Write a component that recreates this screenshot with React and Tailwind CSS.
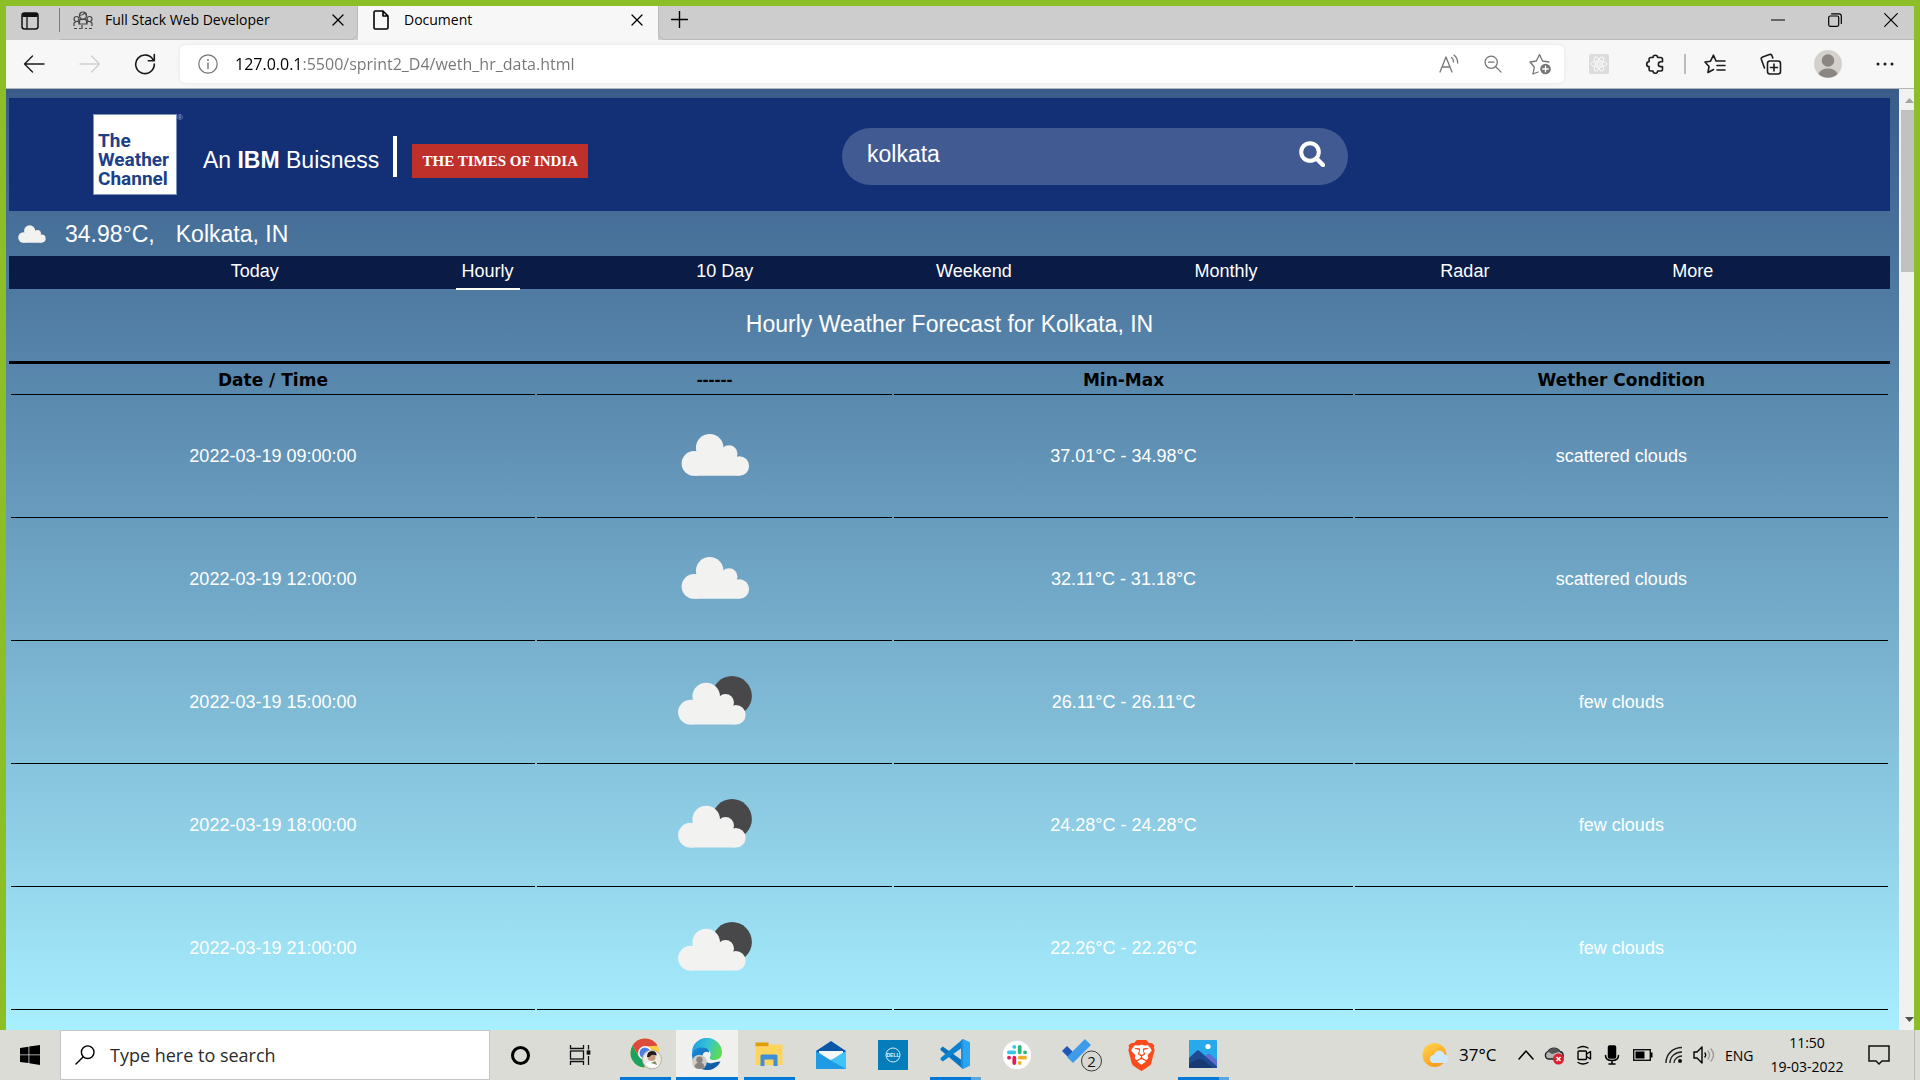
import React from "react";
import { SiBrave } from "react-icons/si";

const arial = "font-['Liberation_Sans',Arial,sans-serif]";

const forecast = [
  { time: "2022-03-19 09:00:00", range: "37.01°C - 34.98°C", condition: "scattered clouds" },
  { time: "2022-03-19 12:00:00", range: "32.11°C - 31.18°C", condition: "scattered clouds" },
  { time: "2022-03-19 15:00:00", range: "26.11°C - 26.11°C", condition: "few clouds" },
  { time: "2022-03-19 18:00:00", range: "24.28°C - 24.28°C", condition: "few clouds" },
  { time: "2022-03-19 21:00:00", range: "22.26°C - 22.26°C", condition: "few clouds" },
];

const navItems = ["Today", "Hourly", "10 Day", "Weekend", "Monthly", "Radar", "More"];

function Line({ className = "", vb = "0 0 20 20", sw = 1.2, children }) {
  return (
    <svg viewBox={vb} className={className} fill="none" stroke="currentColor" strokeWidth={sw} strokeLinecap="round" strokeLinejoin="round" aria-hidden="true">
      {children}
    </svg>
  );
}

function CloudShape() {
  return (
    <g fill="#f2f2f1">
      <circle cx="39.7" cy="20.3" r="13.8" />
      <circle cx="59" cy="26.3" r="8.5" />
      <circle cx="69.3" cy="38.5" r="9.8" />
      <circle cx="24" cy="35.9" r="12.4" />
      <path d="M24 30l16-4h18l8 5 3.300 1v16.300H24z" />
    </g>
  );
}

function WeatherIcon({ condition }) {
  return (
    <svg viewBox="0 0 90 60" className="mx-auto h-[60px] w-[90px]" role="img" aria-label={condition}>
      {condition === "few clouds" ? (
        <>
          <circle cx="62" cy="23" r="19.900" fill="#48484a" />
          <g transform="translate(-3.500 3.300)">
            <CloudShape />
          </g>
        </>
      ) : (
        <g transform="translate(0 .5)">
          <CloudShape />
        </g>
      )}
    </svg>
  );
}

/* ---------- Browser chrome ---------- */

function CloseIcon() {
  return (
    <Line vb="0 0 12 12" className="h-3 w-3" sw={1.3}>
      <path d="M1 1l10 10M11 1L1 11" />
    </Line>
  );
}

function TabBar() {
  return (
    <div className="flex h-[34px] items-stretch bg-[#cdcdcd] text-black">
      <div className="flex flex-1 items-stretch">
        <button aria-label="Tab actions menu" className="flex w-[53px] items-center pb-1 pl-[15px]">
          <svg viewBox="0 0 18 18" className="h-[18px] w-[18px]" fill="none" stroke="#111" strokeWidth="1.5" aria-hidden="true">
            <rect x="1" y="1" width="16" height="16" rx="2.500" />
            <path d="M1.500 3h15" strokeWidth="4" />
            <path d="M6 5v12" strokeWidth="1.300" />
          </svg>
        </button>
        <div className="mt-[2px] h-6 w-px bg-[#7b7b7b]" />
        <div className="flex w-[298px] items-center rounded-br-lg border-r border-b border-[#bababa] pr-[13px] pb-1.5 pl-[13px]">
          <svg viewBox="0 0 20 18" className="h-[18px] w-5" fill="none" stroke="#444" strokeWidth="1.200" aria-hidden="true">
            <circle cx="10" cy="4.500" r="3.500" />
            <path d="M6.500 4.500c2 0 4-1 5-2.500l2 2.500M7 8.500h6l1 4.500H6z" />
            <circle cx="3.500" cy="8" r="2.500" />
            <circle cx="16.500" cy="8" r="2.500" />
            <path d="M1 15v-3l2-1.500h2L7 13M19 15v-3l-2-1.500h-2L13 13M1 17.500h3M6 17.500h2M9 14v4M12 17.500h2M16 17.500h3" />
          </svg>
          <span className="ml-3 flex-1 text-[14px] leading-5">Full Stack Web Developer</span>
          <button aria-label="Close tab"><CloseIcon /></button>
        </div>
        <div className="flex w-[300px] items-center bg-[#f7f7f7] pr-[15px] pb-1.5 pl-[15px]">
          <Line vb="0 0 16 20" className="h-5 w-4" sw={1.6}>
            <path d="M2.500 1h7.500l5 5v11.500q0 1.500-1.500 1.500h-11Q1 19 1 17.500v-15Q1 1 2.500 1zM10 1v5h5" />
          </Line>
          <span className="ml-[15px] flex-1 text-[14px] leading-5">Document</span>
          <button aria-label="Close tab"><CloseIcon /></button>
        </div>
        <div className="flex flex-1 items-center rounded-bl-lg border-b border-l border-[#bababa] pb-1.5 pl-3">
          <button aria-label="New tab">
            <Line vb="0 0 17 17" className="h-[17px] w-[17px]" sw={1.4}>
              <path d="M8.500 .5v16M.5 8.500h16" />
            </Line>
          </button>
        </div>
      </div>
      <div className="flex items-center border-b border-[#bababa] pb-1.5">
        <button aria-label="Minimise" className="flex w-[57px] justify-center">
          <Line vb="0 0 14 14" className="h-3.5 w-3.5"><path d="M.5 7h13" /></Line>
        </button>
        <button aria-label="Restore" className="flex w-[57px] justify-center">
          <Line vb="0 0 14 14" className="h-3.5 w-3.5">
            <rect x=".700" y="3" width="10" height="10.300" rx="1.500" />
            <path d="M3.500 .8h7.500q2.300 0 2.300 2.300V10.500" />
          </Line>
        </button>
        <button aria-label="Close" className="flex w-[51px] justify-center pl-1">
          <Line vb="0 0 14 14" className="h-3.5 w-3.5"><path d="M.7.7l12.600 12.600M13.300.7L.7 13.300" /></Line>
        </button>
      </div>
    </div>
  );
}

function Toolbar() {
  return (
    <div className="flex h-[49px] items-center border-b border-[#b5b5b5] bg-[#f7f7f7] text-[#1b1b1b]">
      <button aria-label="Back" className="flex w-14 justify-center">
        <Line vb="0 0 22 20" className="h-5 w-[22px]" sw={1.4}><path d="M21 10H1.500M9.500 2l-8 8 8 8" /></Line>
      </button>
      <button aria-label="Forward" className="flex w-14 justify-center text-[#cfcfcf]">
        <Line vb="0 0 22 20" className="h-5 w-[22px]" sw={1.4}><path d="M1 10h19.500M12.500 2l8 8-8 8" /></Line>
      </button>
      <button aria-label="Refresh" className="flex w-14 justify-center pr-0.5">
        <Line vb="0 0 22 22" className="h-[22px] w-[22px]" sw={1.6}><path d="M19.500 7.500A9.300 9.300 0 1 0 20.300 11M20.300 1.500v6.200h-6" /></Line>
      </button>
      <div className="ml-1.5 flex h-[38px] flex-1 items-center rounded-md bg-white text-[#757575] shadow-[0_0_4px_rgba(0,0,0,0.08)]">
        <button aria-label="Site information" className="flex w-[55px] justify-center">
          <Line className="h-5 w-5">
            <circle cx="10" cy="10" r="9.200" />
            <path d="M10 9v5.500" strokeWidth="1.400" />
            <path d="M10 5.800v.3" strokeWidth="1.800" />
          </Line>
        </button>
        <input
          aria-label="Address"
          defaultValue="127.0.0.1:5500/sprint2_D4/weth_hr_data.html"
          className="min-w-0 flex-1 bg-[linear-gradient(90deg,#000_67px,#757575_67px)] bg-clip-text text-[16px] leading-6 text-transparent outline-none"
        />
        <button aria-label="Read aloud" className="flex w-[46px] justify-center">
          <Line className="h-5 w-5" sw={1.3}><path d="M1 18L7 3l6 15M3 13h8M12.500 3.500c1.500 1 2 2.500 2 4.500M15 1c2.500 2 3.700 4.500 3.700 8" /></Line>
        </button>
        <button aria-label="Zoom" className="flex w-[46px] justify-center pr-1">
          <Line className="h-[18px] w-[18px]" sw={1.4}><circle cx="8" cy="8" r="6.800" /><path d="M13 13l6 6M5 8h6" /></Line>
        </button>
        <button aria-label="Add to favourites" className="flex w-[46px] justify-center pr-0.5">
          <Line vb="0 0 22 22" className="h-[22px] w-[22px]" sw={1.3}>
            <path d="M9 19l-5 2 1.300-7L1 9l6.300-1L10.500 1.500 13.500 8l6.500 1" />
            <circle cx="16.500" cy="16" r="5.300" fill="currentColor" stroke="none" />
            <path d="M16.500 13.200v5.600M13.700 16h5.600" stroke="#fff" />
          </Line>
        </button>
      </div>
      <button aria-label="React extension" className="ml-[7px] flex w-14 justify-center">
        <svg viewBox="0 0 20 20" className="h-5 w-5" fill="none" stroke="#fff" strokeWidth=".8" aria-hidden="true">
          <rect width="20" height="20" rx="1.500" fill="#dcdcdc" stroke="none" />
          <ellipse cx="10" cy="10" rx="8" ry="3" />
          <ellipse cx="10" cy="10" rx="8" ry="3" transform="rotate(60 10 10)" />
          <ellipse cx="10" cy="10" rx="8" ry="3" transform="rotate(120 10 10)" />
          <circle cx="10" cy="10" r="1.500" />
        </svg>
      </button>
      <button aria-label="Extensions" className="flex w-14 justify-center">
        <Line className="h-5 w-5" sw={1.6}>
          <path d="M5.800 3.500H8a2.300 2.300 0 0 1 4.600 0h3.200q1.700 0 1.700 1.700V7.800h-1.700a2.400 2.400 0 1 0 0 4.800h1.700v2.700q0 1.700-1.700 1.700h-3.200a2.300 2.300 0 0 1-4.600 0H5.800q-1.700 0-1.700-1.700v-2.700a2.400 2.400 0 0 1 0-4.800V5.200q0-1.700 1.700-1.700z" />
        </Line>
      </button>
      <div className="mx-px h-5 w-0.5 bg-[#bcbcbc]" />
      <button aria-label="Favourites" className="flex w-14 justify-center">
        <Line vb="0 0 22 20" className="h-5 w-[22px]" sw={1.6}>
          <path d="M9.500 15.500L4 18.500l1-6L1 8l5.500-.8L9.500 1.200 12 7M13 7h8M13 11.500h8M13 16h8" />
        </Line>
      </button>
      <button aria-label="Collections" className="flex w-14 justify-center">
        <Line vb="0 0 22 22" className="h-[22px] w-[22px]" sw={1.6}>
          <rect x="7.500" y="8" width="13" height="13" rx="2.500" />
          <path d="M14 11v7M10.500 14.500h7M4.500 15L1.300 6.300Q.8 4.500 2.600 3.900L9.500 1.500q1.800-.6 2.500 1.200l.8 2.300" />
        </Line>
      </button>
      <button aria-label="Profile" className="flex w-14 justify-center pl-0.5">
        <svg viewBox="0 0 28 28" className="h-7 w-7" aria-hidden="true">
          <circle cx="14" cy="14" r="14" fill="#d4d1cd" />
          <circle cx="14" cy="10.500" r="6.200" fill="#8b8682" />
          <path d="M4.500 24a10 8 0 0 1 19 0 14 14 0 0 1-19 0z" fill="#8b8682" />
        </svg>
      </button>
      <button aria-label="Settings and more" className="mr-[3px] flex w-14 justify-center pl-1">
        <svg viewBox="0 0 18 4" className="h-1 w-[18px]" fill="#1b1b1b" aria-hidden="true">
          <circle cx="2" cy="2" r="1.500" /><circle cx="9" cy="2" r="1.500" /><circle cx="16" cy="2" r="1.500" />
        </svg>
      </button>
    </div>
  );
}

/* ---------- Weather page ---------- */

function SiteHeader() {
  return (
    <header className="flex h-[113px] items-start bg-[#132f76] text-white">
      <div className="flex w-[833px] shrink-0 items-start pt-4 pl-[84px]">
        <p className="flex h-[81px] w-[84px] items-end border border-[#7f93bd] bg-white pb-1.5 pl-1 font-['Roboto',sans-serif] text-[19px] leading-[19px] font-bold text-[#1c3f8a]">
          The Weather Channel
        </p>
        <span className="text-[8px] leading-2 text-[#9fb0d3]">®</span>
        <p className="mt-8 ml-5 text-[23px] leading-7 whitespace-nowrap">
          An <b>IBM</b> Buisness
        </p>
        <div className="mt-[22px] ml-3.5 h-[41px] w-1 bg-white" />
        <a href="#toi" className="mt-[30px] ml-[15px] flex h-[34px] w-44 items-center justify-center bg-[#c0302b] font-['Liberation_Serif',serif] text-[15px] font-bold whitespace-nowrap">
          THE TIMES OF INDIA
        </a>
      </div>
      <form className="mt-[30px] flex h-[57px] w-[506px] items-start rounded-full bg-[#415a91] pt-3 pr-[23px] pl-[25px]" onSubmit={(e) => e.preventDefault()}>
        <input aria-label="Search city" defaultValue="kolkata" className="min-w-0 flex-1 bg-transparent text-[23px] leading-7 outline-none" />
        <button aria-label="Search" className="mt-px">
          <Line vb="0 0 26 26" className="h-[26px] w-[26px]" sw={4}>
            <circle cx="11" cy="11" r="8.800" />
            <path d="M18 18l6 6" strokeWidth="4.500" />
          </Line>
        </button>
      </form>
    </header>
  );
}

function WeatherPage() {
  return (
    <div className={`${arial} min-w-0 flex-1 overflow-hidden bg-linear-to-b from-[#395c89] to-[#a8efff] pt-[9px] pr-[9px] pl-[3px]`}>
      <SiteHeader />
      <div className="flex h-[45px] items-center pl-[9px] text-[23px] leading-7 text-white">
        <svg viewBox="11 6 69 43" className="h-[18px] w-7" preserveAspectRatio="none" aria-hidden="true">
          <CloudShape />
        </svg>
        <span className="ml-[19px]">34.98°C,</span>
        <span className="ml-[21px]">Kolkata, IN</span>
      </div>
      <nav className="bg-[#0a1c45] pl-[45px]">
        <ul className="flex h-[33px] justify-evenly text-[18px] leading-[30px] text-white">
          {navItems.map((item) => (
            <li key={item}>
              <a href={`#${item}`} className={item === "Hourly" ? "block h-[34px] border-b-2 border-white px-1.5" : "block px-1.5"}>
                {item}
              </a>
            </li>
          ))}
        </ul>
      </nav>
      <h1 className="pt-[21px] pb-[23px] text-center text-[23px] leading-7 text-white">Hourly Weather Forecast for Kolkata, IN</h1>
      <table className="w-full table-fixed border-separate border-spacing-0.5 border-t-[3px] border-black text-center text-[18px]">
        <colgroup>
          <col className="w-[28%]" />
          <col className="w-[19%]" />
          <col className="w-[24.5%]" />
          <col className="w-[28.5%]" />
        </colgroup>
        <thead>
          <tr className="text-[17px] leading-7 text-black">
            <th scope="col" className="border-b border-black font-['DejaVu_Sans',sans-serif] font-bold">Date / Time</th>
            <th scope="col" className="border-b border-black text-[18px] font-bold">------</th>
            <th scope="col" className="border-b border-black font-['DejaVu_Sans',sans-serif] font-bold">Min-Max</th>
            <th scope="col" className="border-b border-black font-['DejaVu_Sans',sans-serif] font-bold">Wether Condition</th>
          </tr>
        </thead>
        <tbody className="text-white">
          {forecast.map((row) => (
            <tr key={row.time} className="h-[121px]">
              <td className="border-b border-black pb-0.5">{row.time}</td>
              <td className="border-b border-black"><WeatherIcon condition={row.condition} /></td>
              <td className="border-b border-black pb-0.5">{row.range}</td>
              <td className="border-b border-black pb-0.5">{row.condition}</td>
            </tr>
          ))}
        </tbody>
      </table>
    </div>
  );
}

function Scrollbar() {
  return (
    <div className="flex w-[15px] flex-col bg-[#f1f1f1]" aria-hidden="true">
      <svg viewBox="0 0 15 21" className="h-[21px]"><path d="M6 14l4.500-5L15 14z" fill="#a3a3a3" /></svg>
      <div className="ml-0.5 h-[162px] bg-[#c1c1c1]" />
      <svg viewBox="0 0 15 21" className="mt-auto h-[21px]"><path d="M6 8l4.500 5L15 8z" fill="#505050" /></svg>
    </div>
  );
}

/* ---------- Taskbar ---------- */

function ChromeLogo() {
  return (
    <svg viewBox="0 0 32 32" className="ml-0.5 h-8 w-8" aria-hidden="true">
      <circle cx="15" cy="15" r="14.500" fill="#ffcd40" />
      <path d="M2.400 7.800A14.500 14.500 0 0 1 27.600 7.800L15 8.500 9 18z" fill="#dd4b3e" />
      <path d="M2.400 7.800A14.500 14.500 0 0 0 14 29.500L20.500 18 9 18.500z" fill="#1aa260" />
      <circle cx="15" cy="15" r="7" fill="#fff" />
      <circle cx="15" cy="15" r="5.500" fill="#4a7fe0" />
      <circle cx="22" cy="21.500" r="9.500" fill="#efe9e2" stroke="#b5b5b0" />
      <path d="M15.500 26q5-4 7-4t6.500 5a9 9 0 0 1-13.500-1z" fill="#fff" />
      <circle cx="21.500" cy="19" r="4" fill="#c79a80" />
      <path d="M17 19q0-6 5-6t4.500 4.500q-5-2-7 1.500z" fill="#241c1a" />
      <path d="M21 25l4-2 2.500 4z" fill="#7d8c62" />
    </svg>
  );
}

function EdgeLogo() {
  return (
    <svg viewBox="0 0 32 32" className="h-8 w-8" aria-hidden="true">
      <defs>
        <linearGradient id="edgeTop" x1="0" x2="1" y1=".2" y2=".5"><stop offset="0" stopColor="#1b9de2" /><stop offset=".5" stopColor="#35c1d6" /><stop offset="1" stopColor="#5fdc4e" /></linearGradient>
        <linearGradient id="edgeLow" x1="0" x2="1" y1="0" y2="1"><stop offset="0" stopColor="#1b8fe0" /><stop offset="1" stopColor="#0d4f93" /></linearGradient>
      </defs>
      <path d="M1 16C2 10 6 7.500 11 8c5 .5 7.500 4 7 6.500-3-2-6.500 0-6.500 3.500 0 4.500 4.500 8 10 7 3-.5 5-1.500 8-1.500A15 15 0 0 1 1 16z" fill="url(#edgeLow)" />
      <path d="M1 15A15 15 0 0 1 31 14.500c0 5.500-4 7.500-7.500 7.500-4 0-5.500-1.500-4.500-3 2-3-.5-9-7-9.500C6.500 9 2.500 11.500 1 15z" fill="url(#edgeTop)" />
      <circle cx="8.500" cy="24" r="7.300" fill="#cfccc8" />
      <circle cx="8.500" cy="21.700" r="3.200" fill="#88837f" />
      <path d="M3.500 29a5 4.500 0 0 1 10 0 7 7 0 0 1-10 0z" fill="#88837f" />
    </svg>
  );
}

function ExplorerLogo() {
  return (
    <svg viewBox="0 0 32 32" className="h-8 w-8" aria-hidden="true">
      <path d="M2.500 4.500h13v4H2.500z" fill="#dd9f05" />
      <path d="M2.500 8.500h12.500l2-2H29.500v20.500h-27z" fill="#ffd45c" />
      <path d="M7.500 28V18q0-1.500 1.500-1.500h14q1.500 0 1.500 1.500v10h-4v-6.500h-9V28z" fill="#3f8fd8" />
    </svg>
  );
}

function MailLogo() {
  return (
    <svg viewBox="0 0 32 32" className="h-8 w-8" aria-hidden="true">
      <path d="M1 12L16 2l15 10v6H1z" fill="#0a57a8" />
      <path d="M4 12h24v8H4z" fill="#f5f7fa" />
      <path d="M1 12l15 9.500L31 12v18H1z" fill="#1f9be6" />
      <path d="M31 12L16 21.500 31 30z" fill="#41c3f8" />
    </svg>
  );
}

function DellLogo() {
  return (
    <svg viewBox="0 0 32 32" className="h-8 w-8" aria-hidden="true">
      <rect x="1" y="1" width="30" height="30" fill="#047dba" />
      <circle cx="16" cy="16" r="7" fill="none" stroke="#d9ecf6" strokeWidth="1" />
      <text x="16" y="18" textAnchor="middle" fontSize="5" fontWeight="700" fill="#e8f4fa" fontFamily="Liberation Sans, sans-serif">DELL</text>
    </svg>
  );
}

function VsCodeLogo() {
  return (
    <svg viewBox="0 0 32 32" className="h-8 w-8" aria-hidden="true">
      <path d="M1.500 10.500l2.300-2L24 23v8L1.500 12z" fill="#0a73be" />
      <path d="M1.500 21.500l2.300 2L24 9V1L1.500 20z" fill="#0b82cf" />
      <path d="M24 1l7 3.200v23.600L24 31z" fill="#2aa5ef" />
      <path d="M24 1l-2 1.500V29.500L24 31z" fill="#1b8fdc" />
    </svg>
  );
}

function SlackLogo() {
  return (
    <svg viewBox="0 0 32 32" className="h-8 w-8" aria-hidden="true" strokeWidth="3.800" strokeLinecap="round">
      <circle cx="16" cy="16" r="14.700" fill="#fff" stroke="#cfcfcb" strokeWidth=".600" />
      <path d="M7.900 13.300h5.400M13.300 7.800v.1" stroke="#36c5f0" />
      <path d="M18.700 7.800v5.500M24 13.300h.1" stroke="#2eb67d" />
      <path d="M18.700 18.700h5.400M18.700 24v.1" stroke="#ecb22e" />
      <path d="M13.300 18.700v5.400M8 18.700h.1" stroke="#e01e5a" />
    </svg>
  );
}

function TodoLogo() {
  return (
    <svg viewBox="0 0 44 36" className="ml-1.5 h-9 w-11" aria-hidden="true">
      <path d="M2 14l5-5 9 9-5 5z" fill="#1f57b8" />
      <path d="M7 20L25 2l6 6-18 18z" fill="#3f9bea" />
      <circle cx="31.500" cy="24" r="10" fill="#d8d8d5" stroke="#3c3c3c" />
      <text x="31.500" y="29.500" textAnchor="middle" fontSize="15" fill="#111" fontFamily="Open Sans, sans-serif">2</text>
    </svg>
  );
}

function BraveLogo() {
  return (
    <span className="flex h-8 w-8 items-center justify-center">
      <span className="flex rounded-full bg-[radial-gradient(#fff_50%,transparent_52%)]">
        <SiBrave className="h-[31px] w-[31px] text-[#fb4a1c]" />
      </span>
    </span>
  );
}

function PhotosLogo() {
  return (
    <svg viewBox="0 0 32 32" className="h-8 w-8" aria-hidden="true">
      <rect x="2" y="2" width="28" height="28" rx="1" fill="#27a9ec" />
      <path d="M13 23l7.500-7q1-1 2 0L30 22v6z" fill="#5b6fd2" />
      <path d="M2 20l7.500-7q1.500-1.300 3 0L30 28.500V30H2z" fill="#1d4a90" />
      <path d="M2 27q8-8 14-5l10 8H2z" fill="#173a72" />
      <circle cx="21" cy="8.500" r="2.600" fill="#fff" />
    </svg>
  );
}

const apps = [
  { name: "Google Chrome", Icon: ChromeLogo, state: "open" },
  { name: "Microsoft Edge", Icon: EdgeLogo, state: "active" },
  { name: "File Explorer", Icon: ExplorerLogo, state: "open" },
  { name: "Mail", Icon: MailLogo },
  { name: "Dell", Icon: DellLogo },
  { name: "Visual Studio Code", Icon: VsCodeLogo, state: "multi" },
  { name: "Slack", Icon: SlackLogo },
  { name: "To Do", Icon: TodoLogo },
  { name: "Brave", Icon: BraveLogo },
  { name: "Photos", Icon: PhotosLogo, state: "multi" },
];

function Tray() {
  return (
    <div className="ml-auto flex items-center text-black">
      <button className="flex items-center text-[17px]">
        <svg viewBox="0 0 26 26" className="h-[26px] w-[26px]" aria-hidden="true">
          <defs><linearGradient id="sun" x1="0" x2=".6" y1="0" y2="1"><stop offset="0" stopColor="#ffd84d" /><stop offset="1" stopColor="#fb9a1c" /></linearGradient></defs>
          <circle cx="12.500" cy="13" r="12" fill="url(#sun)" />
          <path d="M12 21a4 4 0 0 1 0-8 5.500 5.500 0 0 1 10.500-.5A4.300 4.300 0 0 1 22 21z" fill="#cfe9fb" />
        </svg>
        <span className="ml-[11px] w-[46px] text-left">37°C</span>
      </button>
      <button aria-label="Show hidden icons" className="ml-3">
        <Line vb="0 0 18 18" className="h-[18px] w-[18px]" sw={1.5}><path d="M2 13l7-8 7 8" /></Line>
      </button>
      <svg viewBox="0 0 22 20" className="ml-2 h-5 w-[22px]" aria-hidden="true">
        <path d="M5 14a4 4 0 0 1 0-7.500 7 7 0 0 1 12 0 4 4 0 0 1 1 7.500z" fill="#b4b4b4" stroke="#222" strokeWidth="1.300" />
        <path d="M5 6.500a7 7 0 0 1 12 0L9 9z" fill="#555" />
        <circle cx="15.500" cy="14" r="5.500" fill="#d9202e" />
        <path d="M13.500 12l4 4M17.500 12l-4 4" stroke="#fff" strokeWidth="1.500" />
      </svg>
      <Line className="ml-[9px] h-5 w-5" sw={1.4}>
        <rect x="4" y="6" width="8.500" height="8.500" rx="1" /><path d="M12.500 9L16.500 6.500v7.500l-4-2.500M4 3q5-3 10 0M4 17.500q5 3 10 0" />
      </Line>
      <Line className="ml-[9px] h-5 w-[18px]" vb="0 0 18 20" sw={1.5}>
        <rect x="5.500" y="1" width="7" height="12" rx="1" fill="currentColor" /><path d="M2.500 10.500q0 5 6.500 5t6.500-5M9 15.500V19M6 19h6" />
      </Line>
      <svg viewBox="0 0 20 12" className="ml-3 h-3 w-5" aria-hidden="true">
        <rect x=".700" y=".700" width="16.600" height="10.600" fill="none" stroke="#111" strokeWidth="1.400" /><rect x="2.500" y="2.500" width="9" height="7" /><path d="M17.500 3.500h2v5h-2z" />
      </svg>
      <svg viewBox="0 0 18 18" className="ml-3 h-[18px] w-[18px]" fill="none" stroke="#222" strokeWidth="1.400" aria-hidden="true">
        <path d="M1 17C1 8 8 1.500 17 1.500M5 17C5 10.500 10.500 6 17 6M9 17c0-4 4-7 8-7" /><circle cx="15" cy="15" r="2" fill="#111" stroke="none" />
      </svg>
      <Line className="ml-2.5 h-5 w-[22px]" vb="0 0 22 20" sw={1.4}>
        <path d="M1 7h3l5-5v16l-5-5H1zM12 8q1.500 2 0 4" /><path d="M15 6q3 4 0 8M18 4q5 6 0 12" stroke="#9b9b98" />
      </Line>
      <span className="ml-2.5 w-[34px] text-[14px]">ENG</span>
      <div className="ml-1.5 flex w-[84px] flex-col items-center text-[14px] leading-6">
        <time>11:50</time>
        <time>19-03-2022</time>
      </div>
      <button aria-label="Notifications" className="ml-[19px]">
        <svg viewBox="0 0 22 22" className="h-[22px] w-[22px]" fill="none" stroke="#111" strokeWidth="1.500" aria-hidden="true">
          <path d="M1 2h20v15h-7l-3 3-3-3H1z" />
        </svg>
      </button>
      <div className="mr-[5px] ml-6 h-[50px] w-px bg-[#b9bab5]" />
    </div>
  );
}

function Taskbar() {
  return (
    <footer className="flex h-[50px] items-stretch bg-[#dbdcd6]">
      <button aria-label="Start" className="flex w-[60px] items-center justify-center">
        <svg viewBox="0 0 20 20" className="h-5 w-5" aria-hidden="true">
          <path d="M0 3l8.500-1.200v7.700H0zM9.300 1.600L20 0v9.500H9.300zM0 10.300h8.500V18L0 17zM9.300 10.300H20V20L9.300 18.300z" />
        </svg>
      </button>
      <label className="flex w-[430px] items-center border border-[#c6c6c6] bg-white pl-3.5">
        <Line className="h-5 w-5" sw={1.4}><circle cx="12.700" cy="7.200" r="6.300" /><path d="M8.300 11.700L1 19" /></Line>
        <input aria-label="Type here to search" placeholder="Type here to search" className="ml-[15px] min-w-0 flex-1 text-[18px] outline-none placeholder:text-[#2b2b2b]" />
      </label>
      <button aria-label="Cortana" className="flex w-[60px] items-center justify-center">
        <span className="h-[19px] w-[19px] rounded-full border-[3px] border-black" />
      </button>
      <button aria-label="Task view" className="flex w-[62px] items-center justify-center pr-0.5">
        <svg viewBox="0 0 22 20" className="h-5 w-[22px]" fill="none" stroke="#111" strokeWidth="1.300" aria-hidden="true">
          <path d="M1.500 0v3.500h13V0M1.500 20v-3.500h13V20M19.500 0v4.500M19.500 11v9" /><rect x="1.500" y="6" width="13" height="8" /><rect x="18.300" y="6" width="2.400" height="3" fill="#111" />
        </svg>
      </button>
      <div className="ml-0.5 flex items-stretch">
        {apps.map(({ name, Icon, state }) => (
          <button key={name} aria-label={name} className={`flex w-[62px] flex-col items-center ${state === "active" ? "bg-[#f0f0ee]" : ""}`}>
            <span className="flex flex-1 items-center">
              <Icon />
            </span>
            {state === "active" && <span className="h-[3px] w-full bg-[#0078d7]" />}
            {state === "open" && <span className="h-[3px] w-[51px] bg-[#0078d7]" />}
            {state === "multi" && <span className="h-[3px] w-[51px] border-r-10 border-[#5ea6e2] bg-[#0078d7]" />}
          </button>
        ))}
      </div>
      <Tray />
    </footer>
  );
}

export default function App() {
  return (
    <div className="flex h-screen flex-col overflow-hidden font-['Open_Sans','Noto_Sans',sans-serif]">
      <div className="flex min-h-0 flex-1 flex-col bg-[#8cbf26] px-1.5 pt-1.5">
        <TabBar />
        <Toolbar />
        <main className="flex min-h-0 flex-1">
          <WeatherPage />
          <Scrollbar />
        </main>
      </div>
      <Taskbar />
    </div>
  );
}
